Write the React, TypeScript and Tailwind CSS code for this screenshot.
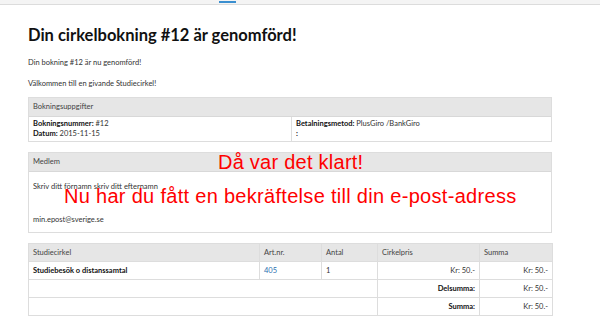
export default function App() {
  return (
    <div className="relative h-[320px] w-[600px] overflow-hidden bg-white font-['Lato',sans-serif] text-[#333]">
      <div className="relative h-[5px] border-b border-[#dcdcdc] bg-[#f4f4f4]">
        <div className="absolute left-[219px] top-[1px] h-[2px] w-[17px] bg-[#3b8fd0]" />
      </div>

      <div className="ml-[28px] w-[524px]">
        <h1 className="mt-[20px] text-[16.5px] leading-[20px] font-bold text-[#111]">
          Din cirkelbokning #12 är genomförd!
        </h1>
        <p className="mt-[13px] text-[7.5px] leading-[10px]">Din bokning #12 är nu genomförd!</p>
        <p className="mt-[11px] text-[7.5px] leading-[10px]">Välkommen till en givande Studiecirkel!</p>

        <div className="mt-[8px] border border-[#dddddd] text-[7.5px]">
          <div className="h-[18px] bg-[#e6e6e6] px-[4px] leading-[18px] text-[#444]">Bokningsuppgifter</div>
          <div className="flex h-[25px] border-t border-[#d8d8d8]">
            <div className="w-[263px] border-r border-[#dddddd] px-[4px] pt-[2px] leading-[10px]">
              <div>
                <b className="text-[#111]">Bokningsnummer:</b> #12
              </div>
              <div>
                <b className="text-[#111]">Datum:</b> 2015-11-15
              </div>
            </div>
            <div className="flex-1 px-[4px] pt-[2px] leading-[10px]">
              <div>
                <b className="text-[#111]">Betalningsmetod:</b> PlusGiro /BankGiro
              </div>
              <div>
                <b className="text-[#111]">:</b>
              </div>
            </div>
          </div>
        </div>

        <div className="mt-[10px] border border-[#dddddd] text-[7.5px]">
          <div className="h-[18px] bg-[#e6e6e6] px-[4px] leading-[18px] text-[#444]">Medlem</div>
          <div className="h-[61px] border-t border-[#d8d8d8] px-[4px] pt-[10px] leading-[10px]">
            <p>Skriv ditt förnamn skriv ditt efternamn</p>
            <p className="mt-[23px]">min.epost@sverige.se</p>
          </div>
        </div>

        <table className="mt-[10px] w-[524px] table-fixed border-collapse border border-[#dddddd] text-[7.5px]">
          <colgroup>
            <col className="w-[231px]" />
            <col className="w-[62px]" />
            <col className="w-[56px]" />
            <col className="w-[102px]" />
            <col className="w-[73px]" />
          </colgroup>
          <thead>
            <tr className="h-[18px] bg-[#e6e6e6] text-left text-[#444]">
              <th className="border border-[#dddddd] px-[4px] font-normal">Studiecirkel</th>
              <th className="border border-[#dddddd] px-[4px] font-normal">Art.nr.</th>
              <th className="border border-[#dddddd] px-[4px] font-normal">Antal</th>
              <th className="border border-[#dddddd] px-[4px] font-normal">Cirkelpris</th>
              <th className="border border-[#dddddd] px-[4px] font-normal">Summa</th>
            </tr>
          </thead>
          <tbody>
            <tr className="h-[18px]">
              <td className="border border-[#dddddd] px-[4px] font-bold text-[#111]">Studiebesök o distanssamtal</td>
              <td className="border border-[#dddddd] px-[4px] text-[#2a6fb0]">405</td>
              <td className="border border-[#dddddd] px-[4px]">1</td>
              <td className="border border-[#dddddd] px-[4px] text-right">Kr: 50.-</td>
              <td className="border border-[#dddddd] px-[4px] text-right">Kr: 50.-</td>
            </tr>
            <tr className="h-[18px]">
              <td colSpan={3} className="border border-[#dddddd]" />
              <td className="border border-[#dddddd] px-[4px] text-right font-bold text-[#111]">Delsumma:</td>
              <td className="border border-[#dddddd] px-[4px] text-right">Kr: 50.-</td>
            </tr>
            <tr className="h-[18px]">
              <td colSpan={3} className="border border-[#dddddd]" />
              <td className="border border-[#dddddd] px-[4px] text-right font-bold text-[#111]">Summa:</td>
              <td className="border border-[#dddddd] px-[4px] text-right">Kr: 50.-</td>
            </tr>
          </tbody>
        </table>
      </div>

      <div className="absolute left-[218px] top-[150px] font-['Liberation_Sans',sans-serif] text-[20px] leading-[24px] tracking-[0.25px] text-[#ff0000]">
        Då var det klart!
      </div>
      <div className="absolute left-[64px] top-[184px] font-['Liberation_Sans',sans-serif] text-[20px] leading-[24px] tracking-[0.3px] text-[#ff0000]">
        Nu har du fått en bekräftelse till din e-post-adress
      </div>
    </div>
  );
}
